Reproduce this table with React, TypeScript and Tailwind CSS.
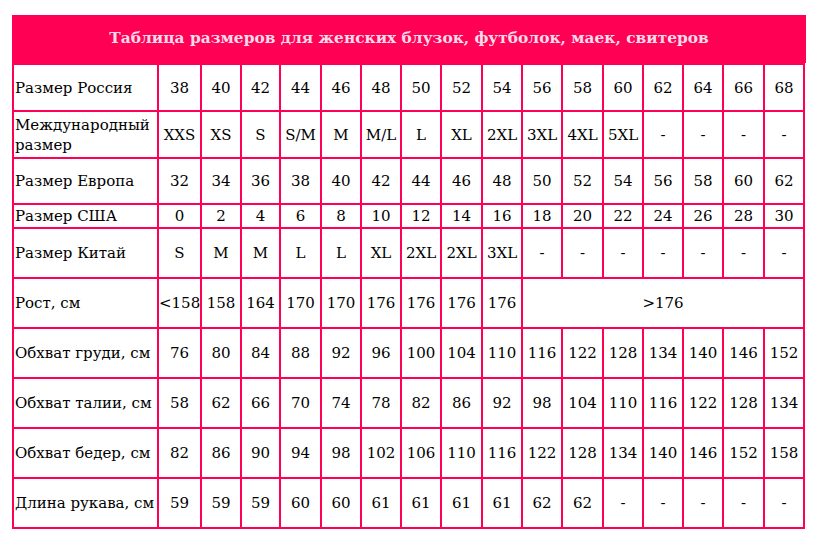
import React from "react";

const widths = [145, 43, 40, 39, 41, 40, 40, 40, 41, 40, 40, 41, 40, 40, 40, 41, 40];

type Row = { label: string; cells: string[]; h: string; tail?: string };

const rows: Row[] = [
  { label: "Размер Россия", h: "h-[47px]", cells: ["38", "40", "42", "44", "46", "48", "50", "52", "54", "56", "58", "60", "62", "64", "66", "68"] },
  { label: "Международный размер", h: "h-[47px]", cells: ["XXS", "XS", "S", "S/M", "M", "M/L", "L", "XL", "2XL", "3XL", "4XL", "5XL", "-", "-", "-", "-"] },
  { label: "Размер Европа", h: "h-[46px]", cells: ["32", "34", "36", "38", "40", "42", "44", "46", "48", "50", "52", "54", "56", "58", "60", "62"] },
  { label: "Размер США", h: "h-[24px]", cells: ["0", "2", "4", "6", "8", "10", "12", "14", "16", "18", "20", "22", "24", "26", "28", "30"] },
  { label: "Размер Китай", h: "h-[50px]", cells: ["S", "M", "M", "L", "L", "XL", "2XL", "2XL", "3XL", "-", "-", "-", "-", "-", "-", "-"] },
  { label: "Рост, см", h: "h-[50px]", cells: ["<158", "158", "164", "170", "170", "176", "176", "176", "176"], tail: ">176" },
  { label: "Обхват груди, см", h: "h-[50px]", cells: ["76", "80", "84", "88", "92", "96", "100", "104", "110", "116", "122", "128", "134", "140", "146", "152"] },
  { label: "Обхват талии, см", h: "h-[50px]", cells: ["58", "62", "66", "70", "74", "78", "82", "86", "92", "98", "104", "110", "116", "122", "128", "134"] },
  { label: "Обхват бедер, см", h: "h-[50px]", cells: ["82", "86", "90", "94", "98", "102", "106", "110", "116", "122", "128", "134", "140", "146", "152", "158"] },
  { label: "Длина рукава, см", h: "h-[50px]", cells: ["59", "59", "59", "60", "60", "61", "61", "61", "61", "62", "62", "-", "-", "-", "-", "-"] },
];

export default function App() {
  return (
    <div className="w-[813px] h-[548px] bg-white pt-[15px] pl-[12px] [font-family:'DejaVu_Serif',serif] text-black">
      <div className="w-[794px] h-[48px] bg-[#ff0055] flex items-center justify-center text-[#fbdbe7] font-bold text-[15.4px]">
        Таблица размеров для женских блузок, футболок, маек, свитеров
      </div>
      <table className="border-collapse table-fixed w-[792px] text-[15px] leading-[20px]">
        <colgroup>
          {widths.map((w, i) => (
            <col key={i} style={{ width: w }} />
          ))}
        </colgroup>
        <tbody>
          {rows.map((r) => (
            <tr key={r.label} className={r.h}>
              <td className="border-2 border-[#ff0055] p-0 pl-[1px] text-left align-middle whitespace-pre-wrap">{r.label}</td>
              {r.cells.map((c, i) => (
                <td key={i} className="border-2 border-[#ff0055] p-0 text-center align-middle whitespace-nowrap">
                  {c}
                </td>
              ))}
              {r.tail && (
                <td colSpan={7} className="border-2 border-[#ff0055] p-0 text-center align-middle">
                  {r.tail}
                </td>
              )}
            </tr>
          ))}
        </tbody>
      </table>
    </div>
  );
}
